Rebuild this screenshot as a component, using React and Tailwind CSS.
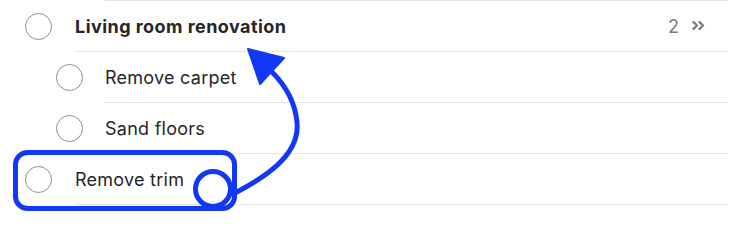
import React from "react";

function Circle() {
  return (
    <span className="block w-[27px] h-[27px] rounded-full border-[1.5px] border-[#8d8d8d] shrink-0" />
  );
}

function Row({ child, bold, text, right }) {
  return (
    <div className={`flex items-center h-[51px] ${child ? "pl-[56px]" : "pl-[25px]"}`}>
      <Circle />
      <div
        className={`flex-1 h-full flex items-center border-b border-[#e4e4e4] ${child ? "ml-[22px]" : "ml-[23px]"} mr-[2px] pt-[1px]`}
      >
        <span
          className={`flex-1 text-[18px] text-[#262626] ${bold ? "font-bold tracking-[0.45px]" : "tracking-[0.25px]"}`}
        >
          {text}
        </span>
        {right}
      </div>
    </div>
  );
}

export default function App() {
  return (
    <div
      className="relative w-[730px] h-[229px] bg-white overflow-hidden"
      style={{ fontFamily: "Inter, 'Noto Sans', sans-serif" }}
    >
      <div className="h-[1px] ml-[105px] mr-[2px] bg-[#e4e4e4]" />
      <Row
        bold
        text="Living room renovation"
        right={
          <div className="flex items-center gap-[13px] mr-[23px] text-[#7c7c7c]">
            <span className="text-[18px]">2</span>
            <svg className="-mt-[2px]" width="13" height="9" viewBox="0 0 13 9" fill="none" stroke="#7c7c7c" strokeWidth="2.4" strokeLinecap="round" strokeLinejoin="round">
              <path d="M1.5 1.2 L5 4.5 L1.5 7.8" />
              <path d="M7.5 1.2 L11 4.5 L7.5 7.8" />
            </svg>
          </div>
        }
      />
      <Row child text="Remove carpet" />
      <Row child text="Sand floors" />
      <Row text="Remove trim" />

      <svg
        className="absolute left-0 top-0 pointer-events-none"
        width="730"
        height="229"
        viewBox="0 0 730 229"
        fill="none"
      >
        <rect x="15.5" y="152.5" width="219" height="56" rx="12" stroke="#1338f5" strokeWidth="5" />
        <circle cx="213" cy="189" r="17.5" fill="white" stroke="#1338f5" strokeWidth="5" />
        <path
          d="M233 194 C 272 174, 300 152, 297 122 C 295 102, 286 86, 272 72"
          stroke="#1338f5"
          strokeWidth="5"
          strokeLinecap="round"
        />
        <polygon points="248,49 284,58 260,84" fill="#1338f5" stroke="#1338f5" strokeWidth="2" strokeLinejoin="round" />
      </svg>
    </div>
  );
}
